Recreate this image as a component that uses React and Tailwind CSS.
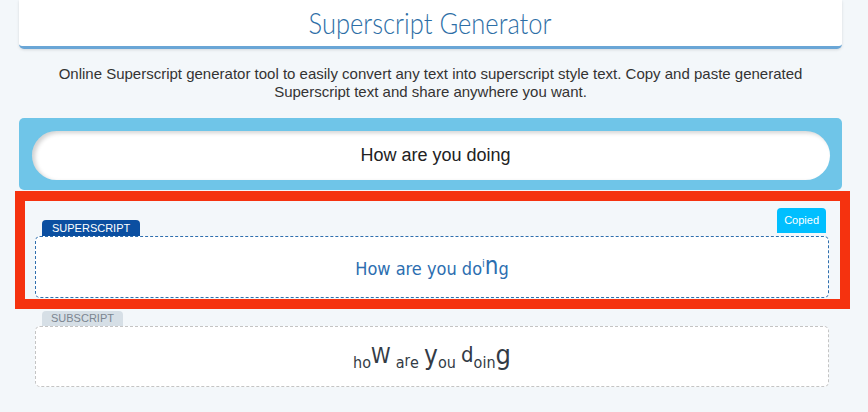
export default function App() {
  return (
    <div className="min-h-[412px] bg-[#f3f7fa] font-['Liberation_Sans',Arial,sans-serif]">
      <div className="pl-[19px] pr-[26px]">
        {/* Header */}
        <div className="h-[49px] bg-white rounded-b-[5px] border-b-[3px] border-[#6aa6d6] shadow-[0_1px_3px_rgba(0,0,0,0.12)] flex items-center justify-center">
          <h1 className="font-['Lato',sans-serif] font-light text-[29px] leading-none text-[#2d6ea6] scale-x-[0.88] mt-[-1px]">
            Superscript Generator
          </h1>
        </div>

        {/* Description */}
        <p className="mt-[16px] px-[20px] text-center text-[15px] leading-[18px] text-[#333]">
          Online Superscript generator tool to easily convert any text into superscript style text. Copy and paste generated Superscript text and share anywhere you want.
        </p>

        {/* Input panel */}
        <div className="mt-[17px] bg-[#6fc5e8] rounded-[5px] pt-[13px] pb-[10px] pl-[13px] pr-[12px]">
          <div className="h-[49px] bg-white rounded-full shadow-[inset_3px_2px_4px_rgba(0,0,0,0.18)] flex items-center justify-center text-[18px] text-[#222]">
            <span className="ml-[9px]">How are you doing</span>
          </div>
        </div>

        {/* Superscript (highlighted) */}
        <div className="mt-[1px] ml-[-4px] mr-[-8px] border-[10px] border-[#f5320f] pt-[7px] pb-[1px] pl-[10px] pr-[11px]">
          <div className="flex items-end justify-between">
            <div className="ml-[7px] h-[16px] px-[10px] bg-[#0b4fa1] rounded-t-[4px] text-white text-[11px] leading-[16px]">
              SUPERSCRIPT
            </div>
            <div className="mr-[3px] mb-[3px] h-[25px] px-[7px] bg-[#00bfff] rounded-t-[4px] text-white text-[11px] leading-[25px]">
              Copied
            </div>
          </div>
          <div className="h-[62px] bg-white border border-dashed border-[#2f6fae] rounded-[5px] flex items-center justify-center font-['DejaVu_Sans_Condensed','Liberation_Sans',sans-serif] text-[18px] text-[#2c6eb0]">
            <span className="mt-[-3px]">
              How are you do
              <span className="text-[11px] align-[8px]">i</span>
              <span className="text-[24px] align-[1px]">n</span>g
            </span>
          </div>
        </div>

        {/* Subscript */}
        <div className="mt-[2px] ml-[16px] mr-[13px]">
          <div className="ml-[7px] w-fit h-[15px] px-[9px] bg-[#d6dfe6] rounded-t-[4px] text-[#7b8590] text-[11px] leading-[15px]">
            SUBSCRIPT
          </div>
          <div className="h-[61px] bg-white border border-dashed border-[#c4c4c4] rounded-[5px] flex items-center justify-center font-['DejaVu_Sans_Condensed','Liberation_Sans',sans-serif] text-[18px] text-[#333b45]">
            <span className="mt-[-2px]">
              <span className="text-[16px] align-[-5px]">ho</span>
              <span className="text-[22px]">W</span>{" "}
              <span className="text-[16px] align-[-5px]">a</span>
              <span className="text-[15px] align-[-3px]">r</span>
              <span className="text-[16px] align-[-5px]">e</span>{" "}
              <span className="text-[26px] align-[-1px]">y</span>
              <span className="text-[16px] align-[-5px]">ou</span>{" "}
              <span className="text-[22px] align-[1px]">d</span>
              <span className="text-[16px] align-[-5px]">oin</span>
              <span className="text-[27px] align-[-1px]">g</span>
            </span>
          </div>
        </div>
      </div>
    </div>
  );
}
